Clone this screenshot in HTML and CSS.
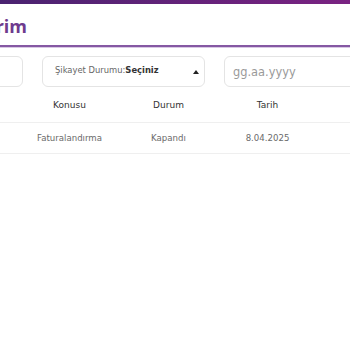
FILE: index.html
```html
<!DOCTYPE html>
<html lang="tr">
<head>
  <meta charset="UTF-8" />
  <meta name="viewport" content="width=device-width, initial-scale=1.0">
  <title>Şikayetlerim</title>
  <link rel="stylesheet" href="styles.css">
</head>
<body>
  <div class="top-bar"></div>

  <div class="page">
    <div class="title-row">
      <h1>Şikayetlerim</h1>
    </div>

    <div class="filters">
      <div class="field"></div>
      <div class="field select">
        <span class="label">Şikayet Durumu:</span><strong>Seçiniz</strong>
        <span class="caret"></span>
      </div>
      <div class="field date">gg.aa.yyyy</div>
    </div>

    <div class="table">
      <div class="row head">
        <span></span>
        <span>Konusu</span>
        <span>Durum</span>
        <span>Tarih</span>
      </div>
      <div class="row">
        <span></span>
        <span>Faturalandırma</span>
        <span>Kapandı</span>
        <span>8.04.2025</span>
      </div>
    </div>
  </div>
</body>
</html>
```

FILE: styles.css
```css
* {
  box-sizing: border-box;
}

body {
  margin: 0;
  font-family: 'DejaVu Sans', sans-serif;
  background: #fff;
  overflow: hidden;
  width: 350px;
  height: 350px;
}

.top-bar {
  height: 4px;
  background: linear-gradient(to right, #4a2270, #7a2382);
}

.page {
  margin-left: -140px;
  width: 600px;
}

.title-row {
  height: 43px;
  display: flex;
  align-items: center;
  border-bottom: 2px solid #8558a3;
  box-shadow: 0 1px 0 #d8c8e4;
}

h1 {
  width: 167px;
  margin: 2px 0 0;
  text-align: right;
  font-family: 'Open Sans', sans-serif;
  font-size: 18px;
  font-weight: 700;
  color: #6e3b8e;
}

.filters {
  display: flex;
  gap: 19px;
  margin-top: 9px;
}

.field {
  width: 163px;
  height: 31px;
  border: 1px solid #e4e4e4;
  border-radius: 6px;
  display: flex;
  align-items: center;
  padding: 0 12px 4px;
  font-size: 8.4px;
  color: #666;
}

.field strong {
  color: #333;
}

.select .caret {
  margin-left: auto;
  margin-right: -7px;
  margin-top: 4px;
  width: 0;
  height: 0;
  border-left: 3px solid transparent;
  border-right: 3px solid transparent;
  border-bottom: 4px solid #222;
}

.date {
  padding-left: 8px;
  padding-bottom: 0;
  font-size: 11.4px;
  color: #9a9a9a;
}

.row {
  display: grid;
  grid-template-columns: 160px repeat(3, 99px);
  align-items: center;
  justify-items: center;
  height: 31px;
  border-bottom: 1px solid #efefef;
  font-size: 8.6px;
  color: #6a6a6a;
}

.row.head {
  height: 36px;
  font-size: 9px;
  color: #333;
}
```
